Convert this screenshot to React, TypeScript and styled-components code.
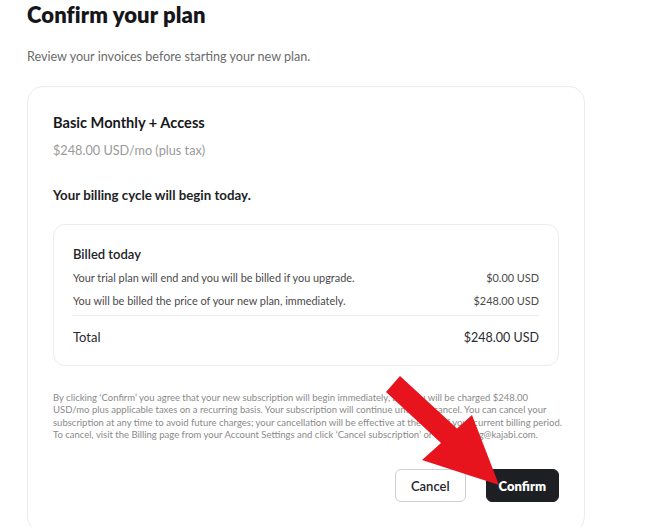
import React from "react";
import styled, { createGlobalStyle } from "styled-components";

const GlobalStyle = createGlobalStyle`
  html, body {
    margin: 0;
    padding: 0;
    background: #ffffff;
    overflow: hidden;
  }
  body {
    font-family: Lato, "Open Sans", Arial, sans-serif;
    color: #1d1d1f;
  }
  * { box-sizing: border-box; }
`;

const Page = styled.div`
  position: relative;
  width: 649px;
  height: 527px;
  padding: 1px 0 0 27px;
  overflow: hidden;
`;

const Title = styled.h1`
  margin: 0;
  font-size: 22px;
  line-height: 28px;
  font-weight: 800;
  color: #15161a;
  letter-spacing: 0.1px;
`;

const Subtitle = styled.p`
  margin: 19px 0 0;
  font-size: 12.6px;
  line-height: 18px;
  color: #6b6b6b;
`;

const Card = styled.section`
  margin-top: 20px;
  width: 558px;
  border: 1px solid #ececec;
  border-radius: 16px;
  padding: 26px 25px 30px 25px;
  background: #fff;
`;

const PlanName = styled.div`
  font-size: 14.6px;
  line-height: 20px;
  font-weight: 700;
  color: #17181b;
`;

const PlanPrice = styled.div`
  margin-top: 8px;
  font-size: 12.7px;
  line-height: 18px;
  color: #9a9a9a;
`;

const CycleNote = styled.div`
  margin-top: 26px;
  font-size: 13.3px;
  line-height: 20px;
  font-weight: 700;
  color: #222326;
`;

const InvoiceBox = styled.div`
  margin-top: 19px;
  border: 1px solid #ececec;
  border-radius: 12px;
  padding: 20px 19px 19px 19px;
`;

const BoxTitle = styled.div`
  font-size: 13px;
  line-height: 18px;
  font-weight: 600;
  color: #222326;
  margin-bottom: 3px;
`;

const LineRow = styled.div<{ $total?: boolean }>`
  display: flex;
  justify-content: space-between;
  align-items: center;
  height: ${(p) => (p.$total ? "18px" : "23px")};
  font-size: ${(p) => (p.$total ? "13px" : "10.9px")};
  color: ${(p) => (p.$total ? "#2a2b2e" : "#4a4a4a")};
`;

const Amount = styled.span<{ $total?: boolean }>`
  font-size: ${(p) => (p.$total ? "12.5px" : "10.9px")};
`;

const Divider = styled.hr`
  border: none;
  border-top: 1px solid #ececec;
  margin: 3px 0 12px;
`;

const Disclaimer = styled.p`
  margin: 26px 0 0;
  font-size: 9.5px;
  line-height: 12.3px;
  color: #8a8a8a;
`;

const DisclaimerLine = styled.span`
  display: block;
  white-space: nowrap;
`;

const Actions = styled.div`
  display: flex;
  justify-content: flex-end;
  gap: 20px;
  margin-top: 28px;
`;

const Button = styled.button<{ $primary?: boolean }>`
  font-family: Lato, "Open Sans", Arial, sans-serif;
  height: 33px;
  padding: 0 ${(p) => (p.$primary ? "12px" : "15px")};
  border-radius: 6px;
  font-size: 13px;
  font-weight: ${(p) => (p.$primary ? 800 : 600)};
  border: 1px solid ${(p) => (p.$primary ? "#1e1f22" : "#cfcfcf")};
  background: ${(p) => (p.$primary ? "#1e1f22" : "#ffffff")};
  color: ${(p) => (p.$primary ? "#ffffff" : "#26272a")};
  cursor: pointer;
`;

const ArrowOverlay = styled.svg`
  position: absolute;
  left: 0;
  top: 0;
  width: 649px;
  height: 527px;
  pointer-events: none;
`;

const disclaimerLines = [
  "By clicking ‘Confirm’ you agree that your new subscription will begin immediately, and you will be charged $248.00",
  "USD/mo plus applicable taxes on a recurring basis. Your subscription will continue until you cancel. You can cancel your",
  "subscription at any time to avoid future charges; your cancellation will be effective at the end of your current billing period.",
  "To cancel, visit the Billing page from your Account Settings and click ‘Cancel subscription’ or email billing@kajabi.com.",
];

export default function App() {
  return (
    <>
      <GlobalStyle />
      <Page>
        <Title>Confirm your plan</Title>
        <Subtitle>Review your invoices before starting your new plan.</Subtitle>
        <Card>
          <PlanName>Basic Monthly + Access</PlanName>
          <PlanPrice>$248.00 USD/mo (plus tax)</PlanPrice>
          <CycleNote>Your billing cycle will begin today.</CycleNote>
          <InvoiceBox>
            <BoxTitle>Billed today</BoxTitle>
            <LineRow>
              <span>Your trial plan will end and you will be billed if you upgrade.</span>
              <Amount>$0.00 USD</Amount>
            </LineRow>
            <LineRow>
              <span>You will be billed the price of your new plan, immediately.</span>
              <Amount>$248.00 USD</Amount>
            </LineRow>
            <Divider />
            <LineRow $total>
              <span>Total</span>
              <Amount $total>$248.00 USD</Amount>
            </LineRow>
          </InvoiceBox>
          <Disclaimer>
            {disclaimerLines.map((line) => (
              <DisclaimerLine key={line}>{line}</DisclaimerLine>
            ))}
          </Disclaimer>
          <Actions>
            <Button>Cancel</Button>
            <Button $primary>Confirm</Button>
          </Actions>
        </Card>
        <ArrowOverlay viewBox="0 0 649 527">
          <polygon
            points="400,376 457,428.6 472,415 499,485 422,460 441,443 386,392"
            fill="#e8141d"
          />
        </ArrowOverlay>
      </Page>
    </>
  );
}
